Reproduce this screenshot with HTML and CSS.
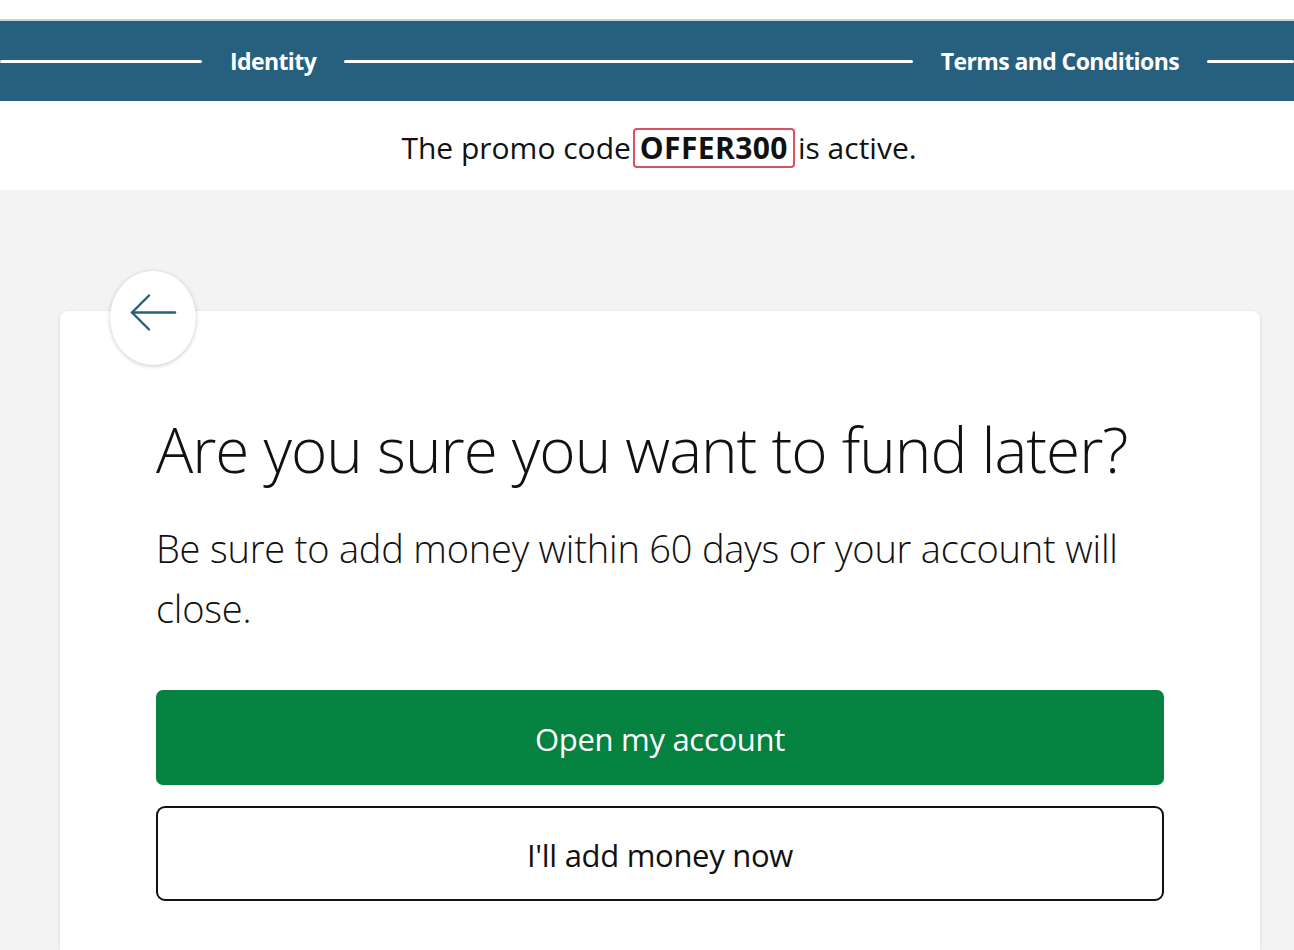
FILE: index.html
```html
<!DOCTYPE html>
<html lang="en">
<head>
<meta charset="utf-8">
<title>Fund later</title>
<link rel="stylesheet" href="styles.css">
</head>
<body>
<div class="topstrip"></div>
<nav class="steps">
  <span class="line line-a"></span>
  <span class="step">Identity</span>
  <span class="line line-b"></span>
  <span class="step">Terms and Conditions</span>
  <span class="line line-c"></span>
</nav>
<div class="promo">
  <p>The promo code<strong class="code">OFFER300</strong>is active.</p>
</div>
<main class="page">
  <section class="card">
    <button class="back" aria-label="Back">
      <svg width="50" height="40" viewBox="0 0 50 40" fill="none" stroke="#27607f" stroke-width="2.4" stroke-linecap="round" stroke-linejoin="round">
        <path d="M47 18.5H4"/>
        <path d="M21 1.5L4 18.5L21 35.5"/>
      </svg>
    </button>
    <h1>Are you sure you want to fund later?</h1>
    <p class="lead">Be sure to add money within 60 days or your account will close.</p>
    <div class="actions">
      <button class="btn btn-primary">Open my account</button>
      <button class="btn btn-outline">I'll add money now</button>
    </div>
  </section>
</main>
</body>
</html>
```
FILE: styles.css
```css
* { box-sizing: border-box; }
html, body { margin: 0; padding: 0; }
body {
  font-family: "Open Sans", "Noto Sans", sans-serif;
  background: #f3f3f3;
  color: #111;
  height: 950px;
  overflow: hidden;
}
.topstrip {
  height: 21px;
  background: #fff;
  border-bottom: 2px solid #c9d3da;
}
.steps {
  height: 80px;
  background: #27607f;
  display: flex;
  align-items: center;
}
.step {
  color: #fff;
  font-weight: 700;
  font-size: 23px;
  letter-spacing: -0.6px;
  padding: 0 28px;
  white-space: nowrap;
}
.line {
  height: 3px;
  background: #fff;
  border-radius: 2px;
}
.line-a { width: 202px; }
.line-b { flex: 1; }
.line-c { width: 87px; }
.promo {
  background: #fff;
  height: 89px;
  display: flex;
  align-items: center;
  justify-content: center;
  padding: 4px 0 0 24px;
}
.promo p {
  margin: 0;
  font-size: 30px;
  letter-spacing: 0;
  color: #111;
}
.code {
  display: inline-block;
  border: 2px solid #d9535f;
  border-radius: 4px;
  padding: 0 5px;
  margin: 0 3px 0 2px;
  line-height: 36px;
  font-weight: 700;
  letter-spacing: 0.4px;
}
.page {
  padding: 121px 34px 0 60px;
}
.card {
  position: relative;
  background: #fff;
  border-radius: 8px 8px 0 0;
  box-shadow: 0 1px 4px rgba(0,0,0,0.12);
  padding: 98px 96px 0 96px;
  height: 639px;
}
.back {
  position: absolute;
  left: 50px;
  top: -40px;
  width: 86px;
  height: 94px;
  border-radius: 50%;
  border: none;
  background: #fff;
  box-shadow: 0 1px 4px rgba(0,0,0,0.22);
  display: flex;
  align-items: center;
  justify-content: center;
  padding: 0;
}
.back svg { margin-left: 0; margin-top: -8px; }
h1 {
  margin: 0;
  font-weight: 300;
  font-size: 62px;
  letter-spacing: -1.0px;
  line-height: 80px;
  color: #111;
}
.lead {
  margin: 29px 0 0;
  font-weight: 300;
  font-size: 38px;
  letter-spacing: -0.2px;
  line-height: 60px;
  color: #111;
  max-width: 990px;
}
.actions {
  margin-top: 52px;
  display: flex;
  flex-direction: column;
  gap: 21px;
  width: 1008px;
}
.btn {
  height: 95px;
  border-radius: 7px;
  font-family: "Open Sans", "Noto Sans", sans-serif;
  font-size: 31px;
  letter-spacing: -0.3px;
  cursor: pointer;
  padding-top: 4px;
}
.btn-primary {
  background: #068240;
  color: #fff;
  border: none;
}
.btn-outline {
  background: #fff;
  color: #111;
  border: 2px solid #111;
  border-radius: 9px;
}
```
